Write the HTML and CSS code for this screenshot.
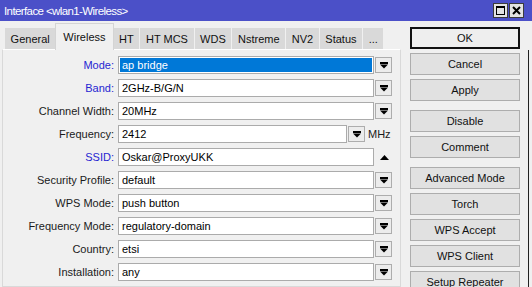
FILE: index.html
```html
<!DOCTYPE html>
<html>
<head>
  <title>Interface wlan1-Wireless</title>
  <meta charset="UTF-8">
  <link rel="stylesheet" href="styles.css">
</head>
<body>
  <div class="window">
    <div class="titlebar">
      <span class="title">Interface &lt;wlan1-Wireless&gt;</span>
      <div class="tb-btns">
        <span class="tb-btn"><span class="max-icon"></span></span>
        <span class="tb-btn">
          <svg width="9" height="9" viewBox="0 0 9 9"><path d="M1 1 L8 8 M8 1 L1 8" stroke="#000" stroke-width="2"/></svg>
        </span>
      </div>
    </div>

    <div class="body">
      <div class="left">
        <div class="tabs">
          <span class="tab">General</span>
          <span class="tab active">Wireless</span>
          <span class="tab">HT</span>
          <span class="tab">HT MCS</span>
          <span class="tab">WDS</span>
          <span class="tab">Nstreme</span>
          <span class="tab">NV2</span>
          <span class="tab">Status</span>
          <span class="tab">...</span>
        </div>

        <div class="panel">
          <div class="row">
            <label class="blue">Mode:</label>
            <div class="field selected">ap bridge</div>
            <span class="dd"><svg width="8" height="7" viewBox="0 0 8 7"><rect x="0" y="0" width="8" height="2"/><path d="M0 2.5 H8 L4 6.5 Z"/></svg></span>
          </div>
          <div class="row">
            <label class="blue">Band:</label>
            <div class="field">2GHz-B/G/N</div>
            <span class="dd"><svg width="8" height="7" viewBox="0 0 8 7"><rect x="0" y="0" width="8" height="2"/><path d="M0 2.5 H8 L4 6.5 Z"/></svg></span>
          </div>
          <div class="row">
            <label>Channel Width:</label>
            <div class="field">20MHz</div>
            <span class="dd"><svg width="8" height="7" viewBox="0 0 8 7"><rect x="0" y="0" width="8" height="2"/><path d="M0 2.5 H8 L4 6.5 Z"/></svg></span>
          </div>
          <div class="row">
            <label>Frequency:</label>
            <div class="field short">2412</div>
            <span class="dd"><svg width="8" height="7" viewBox="0 0 8 7"><rect x="0" y="0" width="8" height="2"/><path d="M0 2.5 H8 L4 6.5 Z"/></svg></span>
            <span class="unit">MHz</span>
          </div>
          <div class="row">
            <label class="blue">SSID:</label>
            <div class="field">Oskar@ProxyUKK</div>
            <span class="up"><svg width="9" height="5" viewBox="0 0 9 5"><path d="M0 5 H9 L4.5 0 Z"/></svg></span>
          </div>
          <div class="row">
            <label>Security Profile:</label>
            <div class="field">default</div>
            <span class="dd"><svg width="8" height="7" viewBox="0 0 8 7"><rect x="0" y="0" width="8" height="2"/><path d="M0 2.5 H8 L4 6.5 Z"/></svg></span>
          </div>
          <div class="row">
            <label>WPS Mode:</label>
            <div class="field">push button</div>
            <span class="dd"><svg width="8" height="7" viewBox="0 0 8 7"><rect x="0" y="0" width="8" height="2"/><path d="M0 2.5 H8 L4 6.5 Z"/></svg></span>
          </div>
          <div class="row">
            <label>Frequency Mode:</label>
            <div class="field">regulatory-domain</div>
            <span class="dd"><svg width="8" height="7" viewBox="0 0 8 7"><rect x="0" y="0" width="8" height="2"/><path d="M0 2.5 H8 L4 6.5 Z"/></svg></span>
          </div>
          <div class="row">
            <label>Country:</label>
            <div class="field">etsi</div>
            <span class="dd"><svg width="8" height="7" viewBox="0 0 8 7"><rect x="0" y="0" width="8" height="2"/><path d="M0 2.5 H8 L4 6.5 Z"/></svg></span>
          </div>
          <div class="row">
            <label>Installation:</label>
            <div class="field">any</div>
            <span class="dd"><svg width="8" height="7" viewBox="0 0 8 7"><rect x="0" y="0" width="8" height="2"/><path d="M0 2.5 H8 L4 6.5 Z"/></svg></span>
          </div>
        </div>
      </div>

      <div class="buttons">
        <button class="btn default">OK</button>
        <button class="btn">Cancel</button>
        <button class="btn">Apply</button>
        <button class="btn group">Disable</button>
        <button class="btn">Comment</button>
        <button class="btn group">Advanced Mode</button>
        <button class="btn">Torch</button>
        <button class="btn">WPS Accept</button>
        <button class="btn">WPS Client</button>
        <button class="btn">Setup Repeater</button>
      </div>
    </div>
  </div>
  <div class="edge"><div class="edge-line"></div></div>
</body>
</html>
```

FILE: styles.css
```css
*, *:before, *:after {
  box-sizing: border-box;
}

html, body {
  margin: 0;
  height: 100%;
}

body {
  display: flex;
  background: #f0f0f0;
  font-family: "Liberation Sans", Arial, sans-serif;
  font-size: 11px;
  color: #111;
  overflow: hidden;
}

.window {
  width: 525px;
  height: 100%;
  background: #f0f0f0;
}

.titlebar {
  height: 21px;
  background: #4b50c8;
  display: flex;
  align-items: center;
  justify-content: space-between;
  padding: 0 1px 0 4px;
}

.title {
  color: #fff;
  font-size: 11.5px;
  letter-spacing: -0.6px;
}

.tb-btns {
  display: flex;
  gap: 1px;
}

.tb-btn {
  width: 15px;
  height: 15px;
  background: #e3e3e3;
  border: 1px solid #3c3c3c;
  display: flex;
  align-items: center;
  justify-content: center;
}

.max-icon {
  width: 9px;
  height: 9px;
  border: 1px solid #000;
  border-top-width: 2px;
}

.body {
  display: flex;
}

.left {
  margin-left: 2px;
  width: 399px;
}

.tabs {
  display: flex;
  align-items: flex-end;
  gap: 1px;
  height: 28px;
  padding: 2px 0 0 3px;
}

.tab {
  height: 21px;
  padding: 0 5.6px;
  background: #d9d9d9;
  display: flex;
  align-items: center;
  color: #111;
}

.tab.active {
  height: 27px;
  margin: 0 -1px -1px;
  padding: 0 7px;
  background: #f0f0f0;
  border: 1px solid #d4d4d4;
  border-bottom: none;
  position: relative;
  z-index: 1;
}

.panel {
  height: 238px;
  border: 1px solid #d9d9d9;
  border-top-color: #fff;
  padding-top: 6px;
}

.row {
  display: flex;
  align-items: center;
  height: 18px;
  margin-bottom: 5px;
}

.row label {
  width: 112px;
  text-align: right;
  padding-right: 1px;
  color: #1a1a1a;
}

.row label.blue {
  color: #2626d2;
}

.field {
  margin-left: 3px;
  width: 256px;
  height: 18px;
  background: #fff;
  border: 1px solid #ababab;
  padding: 0 3px;
  line-height: 16px;
  color: #000;
}

.field.short {
  width: 229px;
}

.field.selected {
  background: #0078d7;
  color: #fff;
  box-shadow: inset 0 0 0 1px #fff;
}

.dd {
  margin-left: 1px;
  width: 17px;
  height: 16px;
  border: 1px solid #adadad;
  background: #ececec;
  display: flex;
  align-items: center;
  justify-content: center;
}

.up {
  margin-left: 6px;
  display: flex;
  align-items: center;
}

.unit {
  margin-left: 3px;
  color: #1a1a1a;
}

.buttons {
  margin-left: 9px;
  width: 110px;
  padding-top: 6px;
  display: flex;
  flex-direction: column;
  gap: 4px;
}

.btn {
  height: 22px;
  width: 110px;
  background: #e1e1e1;
  border: 1px solid #adadad;
  font-family: inherit;
  font-size: 11px;
  color: #111;
  padding: 0;
}

.btn.default {
  border: 1px solid #111;
  box-shadow: inset 0 0 0 1px #111;
  background: #eeeeee;
}

.btn.group {
  margin-top: 5px;
}

.edge {
  width: 7px;
  height: 100%;
  background: #f0f0f0;
  position: relative;
}

.edge:before {
  content: "";
  display: block;
  height: 21px;
  background: #4b50c8;
}

.edge-line {
  position: absolute;
  left: 3px;
  top: 50px;
  width: 1px;
  height: 240px;
  background: #222;
}
```
